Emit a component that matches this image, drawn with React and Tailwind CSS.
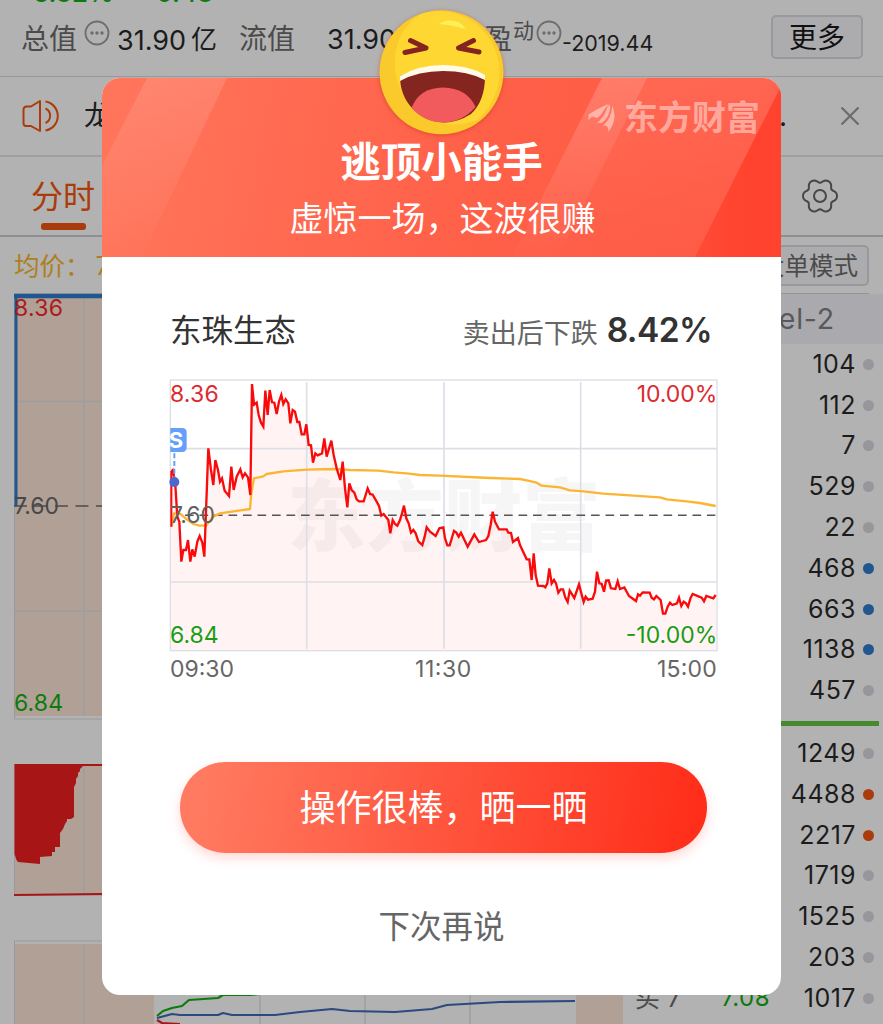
import React from 'react';

const NEUTRAL = 'bg-[#96969b]';
const BLUE = 'bg-[#22568f]';
const ORANGE = 'bg-[#a93c0a]';

const sells = [
  { volume: '104', dot: NEUTRAL },
  { volume: '112', dot: NEUTRAL },
  { volume: '7', dot: NEUTRAL },
  { volume: '529', dot: NEUTRAL },
  { volume: '22', dot: NEUTRAL },
  { volume: '468', dot: BLUE },
  { volume: '663', dot: BLUE },
  { volume: '1138', dot: BLUE },
  { volume: '457', dot: NEUTRAL },
];

const buys = [
  { volume: '1249', dot: NEUTRAL },
  { volume: '4488', dot: ORANGE },
  { volume: '2217', dot: ORANGE },
  { volume: '1719', dot: NEUTRAL },
  { volume: '1525', dot: NEUTRAL },
  { volume: '203', dot: NEUTRAL },
  { label: '买 7', price: '7.08', volume: '1017', dot: NEUTRAL },
];

// chart units are a third of a pixel
const pricePoints =
  '35,300 39,302 46,345 52,440 58,455 64,575 70,540 78,540 84,510 91,575 97,538 104,560 112,515 119,498 127,518 133,560 145,235 153,300 160,345 166,270 174,300 180,335 186,325 194,362 207,378 214,290 221,360 230,320 241,298 248,322 255,310 264,322 271,375 276,42 282,104 290,98 296,135 303,158 310,170 316,62 323,135 329,60 336,97 343,98 350,132 357,95 364,75 370,102 377,88 385,100 391,160 398,120 405,125 412,156 418,156 425,193 433,193 439,163 446,225 453,226 459,278 466,250 473,256 486,250 493,205 500,260 514,212 521,255 530,295 541,330 548,275 555,355 562,412 568,340 575,360 583,368 590,388 597,394 611,394 623,355 630,372 638,374 650,395 657,408 664,437 671,432 685,450 691,490 698,450 705,462 712,467 720,450 726,430 732,407 739,445 746,460 753,488 760,480 767,490 775,514 787,525 794,500 800,472 810,485 827,498 838,475 850,472 855,505 862,526 869,526 882,483 889,488 896,500 903,488 923,530 943,493 957,516 978,510 985,498 992,465 998,425 1005,455 1017,478 1040,478 1045,488 1053,489 1059,516 1074,504 1080,525 1100,568 1108,568 1115,630 1121,550 1127,615 1134,647 1150,648 1156,652 1162,640 1168,595 1175,640 1182,630 1188,640 1195,668 1202,658 1209,658 1216,683 1223,696 1229,662 1243,684 1257,643 1264,670 1271,696 1277,680 1284,689 1298,686 1305,665 1311,605 1318,640 1325,642 1332,665 1338,632 1346,631 1353,655 1366,657 1373,634 1380,657 1393,652 1407,678 1428,693 1434,673 1440,677 1448,667 1469,668 1475,683 1482,688 1489,678 1502,690 1509,731 1516,731 1523,710 1530,698 1537,705 1551,700 1557,683 1564,708 1571,695 1578,700 1584,710 1592,683 1598,672 1610,677 1625,683 1632,694 1639,678 1660,685 1667,675';

const averagePoints =
  '35,470 42,430 62,432 80,448 100,462 118,467 138,467 160,440 180,430 220,424 270,417 274,370 282,325 310,319 320,312 370,304 440,299 530,297 570,300 655,302 700,307 740,310 780,315 840,317 990,324 1080,327 1100,331 1130,338 1145,347 1200,352 1230,361 1270,364 1330,371 1500,382 1520,388 1580,394 1620,399 1667,408';

const gearPoints = Array.from({ length: 72 }, (_, i) => {
  const a = (i * 5 * Math.PI) / 180;
  const r = 15.4 + 1.9 * Math.cos(6 * a) - 0.3 * Math.cos(12 * a);
  return `${(20 + r * Math.cos(a)).toFixed(2)},${(20 + r * Math.sin(a)).toFixed(2)}`;
}).join(' ');

const MoreDots = ({ className }) => (
  <svg viewBox="0 0 26 26" className={className}>
    <circle cx="13" cy="13" r="11.5" fill="none" stroke="#6d6d6d" strokeWidth="1.8" />
    <circle cx="8" cy="13" r="1.7" fill="#6d6d6d" />
    <circle cx="13" cy="13" r="1.7" fill="#6d6d6d" />
    <circle cx="18" cy="13" r="1.7" fill="#6d6d6d" />
  </svg>
);

const Quote = ({ label, price, volume, dot }) => (
  <div className="flex h-[40.8px] items-center justify-end pr-[9px]">
    {label && <span className="w-[86px] text-[25px] text-[#4c4c4c]">{label}</span>}
    {price && <span className="w-[65px] text-[24px] tracking-[0.6px] text-[#0d7a0d]">{price}</span>}
    <span className="w-[70px] text-right text-[25px] tracking-[0.5px] text-[#1c1c1c]">{volume}</span>
    <span className={`ml-[7px] h-[11px] w-[11px] rounded-full ${dot}`}></span>
  </div>
);

const Backdrop = () => (
  <div className="h-[1024px] leading-none">
    {/* Summary */}
    <header className="relative flex h-[77px] border-b border-[#98989a] text-[28px] text-[#4b4b4b]">
      <div className="absolute -top-[20px] left-[33px] flex gap-[42px] text-[26px] font-medium text-[#0d7a0d]">
        <span className="w-[81px]">6.32%</span>
        <span>0.48</span>
      </div>
      <span className="ml-[21px] mt-[25px] w-[56px] shrink-0">总值</span>
      <MoreDots className="ml-[7px] mt-5 h-[26px] w-[26px] shrink-0" />
      <span className="ml-[7px] mt-[27px] w-[74px] shrink-0 text-[27px] text-[#1c1c1c]">31.90</span>
      <span className="mt-[27px] w-[48px] shrink-0 text-[26px] text-[#1c1c1c]">亿</span>
      <span className="mt-[25px] w-[88px] shrink-0">流值</span>
      <span className="mt-[26px] w-[157px] shrink-0 text-[27px] text-[#1c1c1c]">31.90</span>
      <span className="mt-[25px] w-[28px] shrink-0">盈</span>
      <span className="ml-px mt-5 w-[21px] shrink-0 text-[21px]">动</span>
      <MoreDots className="ml-[2px] mt-5 h-[26px] w-[26px] shrink-0" />
      <span className="mt-[33px] shrink-0 text-[21.500px] text-[#1c1c1c]">-2019.44</span>
      <button className="ml-auto mr-5 mt-[15px] h-[44px] w-[92px] shrink-0 rounded-[5px] border-2 border-[#98989d] bg-[#acacaf] pt-[2px] text-[28px] text-[#111]">
        更多
      </button>
    </header>

    {/* Notice */}
    <div className="flex h-[80px] items-center border-b-2 border-[#a0a0a2]">
      <svg viewBox="0 0 40 34" className="ml-[21px] h-[34px] w-[40px]" fill="none" stroke="#a93c0a" strokeWidth="2" strokeLinejoin="round">
        <path d="M10 7.5 19 2V32L10 27H5Q2.500 27 2.500 24V11Q2.500 8 5 7.500Z" />
        <path d="M24.500 9.500a8 8 0 0 1 0 14.500M24.500 2.500a14.700 14.700 0 0 1 0 29" />
      </svg>
      <span className="ml-[23px] text-[28px] text-[#1c1c1c]">龙</span>
      <span className="ml-auto w-[61px] text-[28px] text-[#1c1c1c]">.</span>
      <svg viewBox="0 0 20 20" className="mr-[23px] h-5 w-5" stroke="#6d6d6d" strokeWidth="2.300">
        <path d="M1.500 1.500 18.500 18.500M18.500 1.500 1.500 18.500" />
      </svg>
    </div>

    {/* Tabs */}
    <div className="flex h-[80px] items-start justify-between border-b-2 border-[#8f8f93]">
      <div className="ml-[31px] mt-[24px] flex flex-col items-center text-[32px] text-[#a93c0a]">
        分时
        <span className="mt-[10px] h-[7px] w-[45px] rounded-[3px] bg-[#a93c0a]"></span>
      </div>
      <svg viewBox="0 0 40 40" className="mr-[43px] mt-[19px] h-[40px] w-[40px]" fill="none" stroke="#484848" strokeWidth="2" strokeLinejoin="round">
        <polygon points={gearPoints} />
        <circle cx="20" cy="20" r="6" />
      </svg>
    </div>

    {/* Average price */}
    <div className="flex h-[56px] items-start justify-between text-[25.500px] text-[#ae7f1e]">
      <span className="ml-[14px] mt-[16px]">均价：<span className="ml-[5px]">7.60</span></span>
      <button className="mr-[14px] mt-[8px] flex h-[41px] w-[126px] items-center justify-end rounded-[5px] border-2 border-[#98989d] bg-[#acacaf] pt-px text-[24.500px] text-[#4b4b4b]">
        <span className="mr-[9px] whitespace-nowrap">大单模式</span>
      </button>
    </div>

    <div className="flex h-[731px]">
      {/* Charts */}
      <div className="w-[624px]">
        <svg viewBox="0 0 624 427" className="block h-[427px] w-[624px]">
          <rect x="14.500" y="1" width="608" height="425" fill="none" stroke="#96999d" />
          <rect x="15" y="2" width="607" height="421" fill="#b0a096" />
          <path d="M84 4V423M17 108.500H622M15 318H622" stroke="#9c9fa1" strokeWidth="1.500" />
          <path d="M16 213V3H622" fill="none" stroke="#22568f" strokeWidth="3" />
          <path d="M14 3H622" stroke="#22568f" strokeWidth="4.500" />
          <path d="M14 213H622" stroke="#4b4b4b" strokeWidth="1.500" strokeDasharray="13 7.500" />
          <g fontSize="23">
            <text x="14" y="23" textLength="49" fill="#ae1a1c">8.36</text>
            <text x="14" y="220.500" textLength="45" fill="#484848">7.60</text>
            <text x="14" y="418" textLength="49" fill="#0d7a0d">6.84</text>
          </g>
        </svg>
        <svg viewBox="0 0 624 134" className="mt-[43px] block h-[134px] w-[624px]">
          <rect x="14.500" y="2" width="608" height="130" fill="#b0a096" stroke="#96999d" />
          <path d="M84 2V131" stroke="#9c9fa1" strokeWidth="1.500" />
          <path d="M14.500 1H622V3H83L80 6V8L78 10V13L76 16V20L74 24V54L71 56H67V58L65 61 63 66 60 70V84H55V89H52V93L40 94V101L18 99 16.500 97 14.500 91Z" fill="#a81516" />
          <path d="M14 132 102 131H622" stroke="#a81516" strokeWidth="2" />
        </svg>
        <svg viewBox="0 0 624 84" className="mt-[43px] block h-[84px] w-[624px]">
          <path d="M14.500 84V1H622.500V84" fill="none" stroke="#96999d" />
          <path d="M15 4H154V84H15ZM576 4H623V84H576Z" fill="#b0a096" />
          <path d="M84 4V84M260 1V84M365 1V84M470 1V84" stroke="#9c9fa1" strokeWidth="1.500" />
          <g fill="none" strokeWidth="2.200" strokeLinejoin="round">
            <path d="M157 76 163 71 172 68 182 66 189 60 218 58 223 55 250 55 268 53 290 50" stroke="#0d7a0d" />
            <path d="M157 78 172 74 180 75 218 75 223 73 232 75 275 75 300 72 332 69 350 71 395 72 432 69 447 65 500 62 575 61" stroke="#2c4a80" />
            <path d="M157 80 162 83 180 84" stroke="#a81516" />
          </g>
        </svg>
      </div>

      {/* Order book */}
      <div className="w-[259px]">
        <div className="mr-[14px] h-px bg-[#949498]"></div>
        <div className="flex h-[50px] items-center justify-end bg-[#a9a9ae] pr-[48px] text-[28.500px] tracking-[0.800px] text-[#59595b]">Level-2</div>
        {sells.map((row) => (
          <Quote key={row.volume} {...row} />
        ))}
        <div className="mb-[7px] mr-[4px] mt-[9.500px] h-[5.500px] bg-[#46892f]"></div>
        {buys.map((row) => (
          <Quote key={row.volume} {...row} />
        ))}
      </div>
    </div>
  </div>
);

const Emoji = () => (
  <svg viewBox="0 0 145 145" className="absolute -top-[78px] left-[268px] h-[145px] w-[145px] drop-shadow-[0_1px_2px_rgba(190,50,20,0.5)]">
    <circle cx="71.500" cy="72.300" r="62" fill="#fac92c" />
    <path d="M71 11A61.500 61.500 0 0 1 107 120Q70 133 44 108Q23 87 25 58Q27 29 51 14Q60 11 71 11Z" fill="#ffd732" />
    <path d="M69 24Q77 18 88 22Q94 25 95 29Q83 25 69 24Z" fill="#fff05a" />
    <g fill="none" stroke="#85231e" strokeWidth="5" strokeLinecap="round" strokeLinejoin="round">
      <path d="M40.500 40.500 56 48 35 52.500" />
      <path d="M103.500 40.500 88.500 48 109 52" />
    </g>
    <path d="M30 76Q73 56 115 76Q115 101 101 114Q87 123 73 122.500Q56 122 43 109Q30 96 30 76Z" fill="#852520" />
    <path d="M30 76Q49 65 73 65Q98 65 115 75V80Q98 71 73 71Q48 71 30 81Z" fill="#fffbe8" />
    <path d="M41.500 108Q49 88 73 87.500Q97 88 105.500 107Q92 122.500 73 122.500Q54 122 41.500 108Z" fill="#f25b5e" />
  </svg>
);

const Banner = () => (
  <div className="relative h-[179px] overflow-hidden rounded-t-[18px] bg-[linear-gradient(100deg,#ff765c_0%,#ff6048_55%,#ff5843_100%)] text-center leading-none text-white">
    <svg viewBox="0 0 679 179" className="absolute inset-0 h-full w-full">
      <defs>
        <linearGradient id="beam" x1="0" y1="0" x2="0" y2="1">
          <stop offset="0" stopColor="#fff" stopOpacity="0.130" />
          <stop offset="1" stopColor="#fff" stopOpacity="0.010" />
        </linearGradient>
        <linearGradient id="corner" x1="0" y1="0" x2="1" y2="0">
          <stop offset="0" stopColor="#ff4b37" />
          <stop offset="0.600" stopColor="#ff432e" />
        </linearGradient>
      </defs>
      <path d="M45 0H125L40 179H0V88Z" fill="url(#beam)" />
      <path d="M500 0H545L456 179H410Z" fill="url(#beam)" />
      <path d="M500 0H679V12L594 179H410Z" fill="url(#beam)" opacity="0.550" />
      <path d="M679 8V179H593Z" fill="url(#corner)" />
    </svg>
    <div className="absolute left-[485px] top-[23px] flex items-center text-white/45">
      <svg viewBox="0 0 30 32" className="h-[32px] w-[30px]" fill="currentColor">
        <path d="M1.500 12.500Q10 7 18 3.500L22 2Q17.500 6 15 11Q13 15 10 16L5 14.500L1.500 18Z" />
        <path d="M8.500 22Q17 16 19.500 7.500Q20.500 4 23 2.500Q23.500 10 20 15.500Q17 20 14 21Q11 20 8.500 22Z" />
        <path d="M25 3.500Q31.500 16 21.500 30Q21.500 25 19 23.500L15.500 24Q25.500 16 25 3.500Z" />
      </svg>
      <span className="ml-[7px] text-[34px] font-bold">东方财富</span>
    </div>
    <h1 className="relative mt-[65px] text-[40.500px] font-bold">逃顶小能手</h1>
    <p className="relative left-px mt-[18px] text-[34px]">虚惊一场，这波很赚</p>
  </div>
);

const PriceChart = () => (
  <svg viewBox="0 0 1710 960" className="ml-[58px] block h-[320px] w-[570px]">
    <text x="382" y="525" fontSize="235" fontWeight="900" fill="#f6f6f6">东方财富</text>
    <polygon points={`31,842 ${pricePoints} 1670,842`} fill="#f00" opacity="0.047" />
    <g fill="none" stroke="#dcdfe6" strokeWidth="5">
      <path d="M440 36V836M852 36V836M1262 36V836M31 236H1671M31 636H1671" />
      <rect x="31" y="30" width="1640" height="812" strokeWidth="4" />
    </g>
    <path d="M75 436H1666" stroke="#555" strokeWidth="4.500" strokeDasharray="26 17.500" />
    <polyline points={averagePoints} fill="none" stroke="#fbb532" strokeWidth="7" strokeLinejoin="round" />
    <polyline points={pricePoints} fill="none" stroke="#f90b0b" strokeWidth="7" />
    {/* Sell marker */}
    <path d="M34 470V305L38 300 44 330" fill="none" stroke="#f90b0b" strokeWidth="6" />
    <path d="M43 250V325" stroke="#65a0f8" strokeWidth="6" strokeDasharray="15 8" />
    <circle cx="43" cy="336" r="15" fill="#4a68cf" />
    <path d="M31 174H66Q80 174 80 188V232Q80 246 66 246H31Z" fill="#65a0f8" />
    <text x="26" y="234" fontSize="66" fontWeight="700" fill="#fff">S</text>
    <g fontSize="69">
      <text x="30" y="95" textLength="146" fill="#dc2b2f">8.36</text>
      <text x="30" y="458" textLength="135" fill="#606060">7.60</text>
      <text x="30" y="819" textLength="146" fill="#1a9c14">6.84</text>
      <text x="1430" y="95" textLength="242" fill="#dc2b2f">10.00%</text>
      <text x="1397" y="819" textLength="275" fill="#1a9c14">-10.00%</text>
      <g fill="#666">
        <text x="30" y="921" textLength="192">09:30</text>
        <text x="765" y="921" textLength="169">11:30</text>
        <text x="1491" y="921" textLength="179">15:00</text>
      </g>
    </g>
  </svg>
);

const App = () => (
  <div className="relative h-[1024px] w-[883px] overflow-hidden bg-[#b2b2b2] font-['Inter','Noto_Sans_CJK_SC',sans-serif]">
    <Backdrop />
    <div className="absolute left-[102px] top-[78px] h-[917px] w-[679px] rounded-[18px] bg-white leading-none">
      <Banner />
      <Emoji />
      <div className="flex h-[113px] items-end justify-between pb-[23px] pl-[68px] pr-[69px]">
        <span className="mb-px text-[31.500px] text-[#333]">东珠生态</span>
        <span className="flex items-end text-[27px] text-[#666]">
          卖出后下跌
          <strong className="ml-[9px] text-[33.500px] font-semibold tracking-[-0.600px] text-[#333]">8.42%</strong>
        </span>
      </div>
      <PriceChart />
      <div className="mt-[72px] flex flex-col items-center">
        <button className="ml-[4px] h-[91px] w-[527px] rounded-full bg-[linear-gradient(100deg,#ff7a60_5%,#ff2e1a_97%)] text-[36px] text-white shadow-[0_5px_12px_rgba(255,60,40,0.200)]">
          操作很棒，晒一晒
        </button>
        <button className="mt-[58px] text-[31.500px] text-[#666]">下次再说</button>
      </div>
    </div>
  </div>
);

export default App;
